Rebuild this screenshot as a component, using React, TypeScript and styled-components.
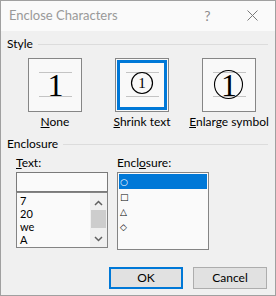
import React from "react";
import styled, { createGlobalStyle, css } from "styled-components";

const GlobalStyle = createGlobalStyle`
  html, body { margin: 0; padding: 0; }
  body {
    background: #f0f0f0;
    font-family: Lato, "Liberation Sans", sans-serif;
    font-size: 12px;
    line-height: 16px;
    color: #000;
  }
`;

const Window = styled.div`
  width: 276px;
  height: 296px;
  box-sizing: border-box;
  border: 1px solid #a0a0a0;
  background: #f0f0f0;
  display: flex;
  flex-direction: column;
  overflow: hidden;
`;

const TitleBar = styled.div`
  height: 30px;
  flex: none;
  display: flex;
  background: #fafafa;
`;

const Title = styled.div`
  flex: 1;
  padding: 6px 0 0 8px;
  font-size: 13px;
  color: #999;
`;

const CaptionButton = styled.div`
  width: 45px;
  display: flex;
  align-items: center;
  justify-content: center;
  padding-bottom: 1px;
  color: #8c8c8c;
  font-size: 14px;
`;

const Body = styled.div`
  flex: 1;
  display: flex;
  flex-direction: column;
  padding: 5px 7px 0 6px;
`;

const GroupHeader = styled.div<{ $gap?: number }>`
  display: flex;
  align-items: center;
  gap: 5px;
  margin-top: ${(p) => p.$gap ?? 0}px;

  &::after {
    content: "";
    flex: 1;
    height: 1px;
    background: #dcdcdc;
  }
`;

const OptionRow = styled.div`
  display: flex;
  gap: 33px;
  margin: 6px 0 0 21px;
`;

const Option = styled.div`
  width: 54px;
  display: flex;
  flex-direction: column;
  align-items: center;
  gap: 2px;
`;

const StyleBox = styled.div<{ $selected?: boolean }>`
  width: 54px;
  height: 54px;
  box-sizing: border-box;
  border: 1px solid #868686;
  background: #f9f9f9;
  ${(p) =>
    p.$selected &&
    css`
      box-shadow: inset 0 0 0 1px #f9f9f9, inset 0 0 0 4px #0078d7;
    `}

  svg {
    display: block;
  }
`;

const OptionLabel = styled.div`
  white-space: nowrap;
`;

const FieldRow = styled.div`
  display: flex;
  gap: 9px;
  margin: 3px 0 0 9px;
`;

const Field = styled.div`
  width: 92px;
  display: flex;
  flex-direction: column;
`;

const FieldLabel = styled.div`
  height: 16px;
  margin-bottom: 1px;
`;

const TextInput = styled.div`
  height: 20px;
  box-sizing: border-box;
  border: 1px solid #7a7a7a;
  background: #fafafa;
`;

const TextList = styled.div`
  height: 56px;
  box-sizing: border-box;
  border: 1px solid #848484;
  background: #fafafa;
  display: flex;
`;

const ListItems = styled.div`
  flex: 1;
  padding: 1px 0 0 3px;
  font-size: 11px;
  line-height: 13px;
  overflow: hidden;
`;

const Scrollbar = styled.div`
  width: 17px;
  display: flex;
  flex-direction: column;
  background: #f0f0f0;
`;

const ScrollArrow = styled.div<{ $down?: boolean }>`
  height: 17px;
  display: flex;
  align-items: center;
  justify-content: center;
  padding-top: ${(p) => (p.$down ? 0 : 3)}px;
  box-sizing: border-box;
`;

const Thumb = styled.div`
  height: 18px;
  margin: 0 1px;
  background: #cdcdcd;
`;

const Track = styled.div`
  flex: 1;
`;

const EnclosureList = styled.div`
  height: 78px;
  box-sizing: border-box;
  border: 1px solid #848484;
  background: #fafafa;
  padding: 1px;
`;

const EnclosureItem = styled.div<{ $selected?: boolean }>`
  height: 15px;
  line-height: 16px;
  padding-left: 1px;
  font-family: "DejaVu Sans", sans-serif;
  font-size: 9px;
  font-weight: bold;
  color: ${(p) => (p.$selected ? "#fff" : "#000")};
  background: ${(p) => (p.$selected ? "#0078d7" : "transparent")};
`;

const ButtonRow = styled.div`
  display: flex;
  justify-content: flex-end;
  gap: 10px;
  margin-top: 17px;
  padding-right: 1px;
`;

const Button = styled.div<{ $default?: boolean }>`
  width: 74px;
  height: 22px;
  box-sizing: border-box;
  display: flex;
  align-items: center;
  justify-content: center;
  background: #e1e1e1;
  border: ${(p) => (p.$default ? "2px solid #0078d7" : "1px solid #adadad")};
`;

const Guides = () => (
  <>
    <line x1="10" y1="13.5" x2="43" y2="13.5" stroke="#c4c4c4" strokeWidth="1" />
    <line x1="10" y1="37.5" x2="43" y2="37.5" stroke="#c4c4c4" strokeWidth="1" />
  </>
);

const digitFont = '"Liberation Serif", serif';

const NoneArt = () => (
  <svg width="52" height="52" viewBox="0 0 52 52">
    <Guides />
    <text x="26.5" y="37" textAnchor="middle" fontFamily={digitFont} fontSize="32">
      1
    </text>
  </svg>
);

const ShrinkArt = () => (
  <svg width="52" height="52" viewBox="0 0 52 52">
    <Guides />
    <circle cx="26" cy="24" r="10.5" fill="none" stroke="#000" strokeWidth="1.2" />
    <text x="26" y="29" textAnchor="middle" fontFamily={digitFont} fontSize="15">
      1
    </text>
  </svg>
);

const EnlargeArt = () => (
  <svg width="52" height="52" viewBox="0 0 52 52">
    <Guides />
    <circle cx="25.5" cy="25.5" r="14" fill="none" stroke="#000" strokeWidth="1.1" />
    <text x="26" y="36.5" textAnchor="middle" fontFamily={digitFont} fontSize="32">
      1
    </text>
  </svg>
);

const Chevron = ({ down }: { down?: boolean }) => (
  <svg width="9" height="6" viewBox="0 0 9 6">
    <polyline
      points={down ? "1,1 4.5,4.5 8,1" : "1,5 4.5,1.5 8,5"}
      fill="none"
      stroke="#606060"
      strokeWidth="1.5"
    />
  </svg>
);

const options = [
  { key: "none", first: "N", rest: "one", art: <NoneArt /> },
  { key: "shrink", first: "S", rest: "hrink text", art: <ShrinkArt />, selected: true },
  { key: "enlarge", first: "E", rest: "nlarge symbol", art: <EnlargeArt /> },
];

const textItems = ["7", "20", "we", "A"];
const enclosures = ["○", "□", "△", "◇"];

export default function App() {
  return (
    <>
      <GlobalStyle />
      <Window>
        <TitleBar>
          <Title>Enclose Characters</Title>
          <CaptionButton>?</CaptionButton>
          <CaptionButton>
            <svg width="11" height="11" viewBox="0 0 11 11">
              <path d="M0.5 0.5 L10.5 10.5 M10.5 0.5 L0.5 10.5" stroke="#7a7a7a" strokeWidth="1" />
            </svg>
          </CaptionButton>
        </TitleBar>
        <Body>
          <GroupHeader>Style</GroupHeader>
          <OptionRow>
            {options.map((o) => (
              <Option key={o.key}>
                <StyleBox $selected={o.selected}>{o.art}</StyleBox>
                <OptionLabel>
                  <u>{o.first}</u>
                  {o.rest}
                </OptionLabel>
              </Option>
            ))}
          </OptionRow>
          <GroupHeader $gap={6}>Enclosure</GroupHeader>
          <FieldRow>
            <Field>
              <FieldLabel>
                <u>T</u>ext:
              </FieldLabel>
              <TextInput />
              <TextList>
                <ListItems>
                  {textItems.map((t) => (
                    <div key={t}>{t}</div>
                  ))}
                </ListItems>
                <Scrollbar>
                  <ScrollArrow>
                    <Chevron />
                  </ScrollArrow>
                  <Thumb />
                  <Track />
                  <ScrollArrow $down>
                    <Chevron down />
                  </ScrollArrow>
                </Scrollbar>
              </TextList>
            </Field>
            <Field>
              <FieldLabel>
                Encl<u>o</u>sure:
              </FieldLabel>
              <EnclosureList>
                {enclosures.map((e, i) => (
                  <EnclosureItem key={e} $selected={i === 0}>
                    {e}
                  </EnclosureItem>
                ))}
              </EnclosureList>
            </Field>
          </FieldRow>
          <ButtonRow>
            <Button $default>OK</Button>
            <Button>Cancel</Button>
          </ButtonRow>
        </Body>
      </Window>
    </>
  );
}
